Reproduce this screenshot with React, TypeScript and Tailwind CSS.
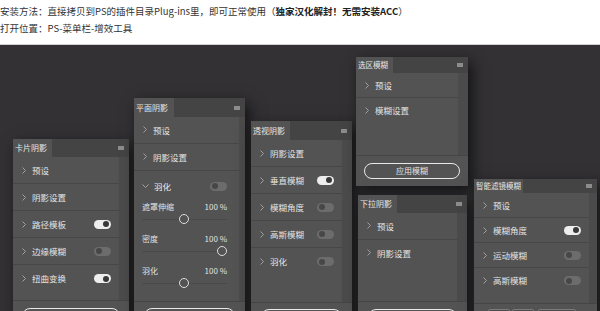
import React from "react";

type Row = { label: string; toggle?: boolean };

const panelFont = "font-['Noto_Sans_CJK_SC','Noto_Sans',sans-serif]";

function Chevron() {
  return (
    <svg width="4" height="7" viewBox="0 0 4 7" className="shrink-0">
      <polyline points="0.5,0.5 3.5,3.5 0.5,6.5" fill="none" stroke="#a9a9a9" strokeWidth="0.9" />
    </svg>
  );
}

function ChevronDown() {
  return (
    <svg width="7" height="4" viewBox="0 0 7 4" className="shrink-0">
      <polyline points="0.5,0.5 3.5,3.5 6.5,0.5" fill="none" stroke="#a9a9a9" strokeWidth="0.9" />
    </svg>
  );
}

function Toggle({ on }: { on: boolean }) {
  return on ? (
    <span className="ml-auto flex h-[9px] w-[17px] shrink-0 items-center justify-end rounded-full bg-[#ededed] pr-[2px]">
      <span className="h-[6px] w-[6px] rounded-full bg-[#383838]" />
    </span>
  ) : (
    <span className="ml-auto flex h-[9px] w-[17px] shrink-0 items-center rounded-full bg-[#6c6c6c] pl-[2px]">
      <span className="h-[6px] w-[6px] rounded-full bg-[#474747]" />
    </span>
  );
}

function Rows({ rows, h }: { rows: Row[]; h: string }) {
  return (
    <div className="flex flex-col divide-y divide-[#474747]">
      {rows.map((r) => (
        <div key={r.label} className={`flex items-center pl-[9px] pr-[8px] ${h}`}>
          <Chevron />
          <span className="ml-[6px] text-[8.5px] leading-none text-[#e4e4e4]">{r.label}</span>
          {r.toggle !== undefined && <Toggle on={r.toggle} />}
        </div>
      ))}
    </div>
  );
}

function Panel({
  title,
  className,
  headClass,
  tabClass,
  stripClass = "w-[10px]",
  children,
  footer,
}: {
  title: string;
  className: string;
  headClass: string;
  tabClass: string;
  stripClass?: string;
  children: React.ReactNode;
  footer: React.ReactNode;
}) {
  return (
    <div className={`flex shrink-0 flex-col bg-[#535353] shadow-[4px_5px_14px_rgba(0,0,0,0.65)] ${panelFont} ${className}`}>
      {/* 标题栏 */}
      <div className={`flex items-stretch bg-[#444444] ${headClass}`}>
        <div className={`flex items-center bg-[#535353] pl-[2px] leading-none text-[#e6e6e6] ${tabClass}`}>{title}</div>
        <span className="ml-auto mr-[5px] h-[4px] w-[6px] self-center bg-[#8c8c8c]" />
      </div>
      <div className="flex">
        <div className="flex flex-1 flex-col">{children}</div>
        <div className={`bg-[#4b4b4b] ${stripClass}`} />
      </div>
      <div className="border-t border-[#454545]">{footer}</div>
    </div>
  );
}

function PillButton({ text = "" }: { text?: string }) {
  return (
    <div className="flex h-[16px] items-center justify-center rounded-full border-[1.5px] border-[#e9e9e9] text-[8px] leading-none text-[#e2e2e2]">
      {text}
    </div>
  );
}

const sliders = [
  { label: "遮罩伸缩", knob: "left-[37px]" },
  { label: "密度", knob: "left-[75px]" },
  { label: "羽化", knob: "left-[37px]" },
];

export default function App() {
  return (
    <div className="h-[311px] w-[600px] overflow-hidden bg-white">
      {/* 说明文字 */}
      <div className="h-[45px] border-b border-[#d2d2d2] pt-[3px] font-['Noto_Sans_CJK_SC','Noto_Sans',sans-serif] text-[9.5px] leading-[17px] text-[#333]">
        <p className="whitespace-nowrap">
          安装方法：直接拷贝到PS的插件目录Plug-ins里，即可正常使用（
          <b className="font-bold text-[#222]">独家汉化解封！无需安装ACC</b>）
        </p>
        <p className="whitespace-nowrap">打开位置：PS-菜单栏-增效工具</p>
      </div>

      {/* 面板区域 */}
      <div className="h-[266px] overflow-hidden bg-[#333134]">
        <div className="flex items-start pl-[13px]">
          <Panel
            title="卡片阴影"
            className="mt-[94px] w-[116px]"
            headClass="h-[18px]"
            tabClass="w-[39px] text-[8px]"
            footer={
              <div className="px-[9px] pt-[7px] pb-[7px]">
                <PillButton />
              </div>
            }
          >
            <Rows
              h="h-[27px]"
              rows={[
                { label: "预设" },
                { label: "阴影设置" },
                { label: "路径模板", toggle: true },
                { label: "边缘模糊", toggle: false },
                { label: "扭曲变换", toggle: true },
              ]}
            />
            <div className="h-[8px]" />
          </Panel>

          <Panel
            title="平面阴影"
            className="ml-[5px] mt-[53px] w-[111px]"
            headClass="h-[19px]"
            tabClass="w-[40px] text-[8px]"
            stripClass="w-[6px]"
            footer={
              <div className="px-[10px] pt-[6px] pb-[7px]">
                <PillButton />
              </div>
            }
          >
            <Rows h="h-[26.5px]" rows={[{ label: "预设" }, { label: "阴影设置" }]} />
            <div className="border-t border-[#474747]">
              <div className="flex h-[30px] items-center pl-[8px] pr-[12px]">
                <ChevronDown />
                <span className="ml-[5px] text-[8.5px] leading-none text-[#e8e8e8]">羽化</span>
                <Toggle on={false} />
              </div>
              {sliders.map((s) => (
                <div key={s.label} className="h-[32px] pl-[8px] pr-[12px]">
                  <div className="flex h-[12px] items-center justify-between text-[8px] leading-none text-[#e0e0e0]">
                    <span>{s.label}</span>
                    <span>100 %</span>
                  </div>
                  <div className="relative flex h-[12px] items-center">
                    <div className="h-px w-full bg-[#4a4a4a]" />
                    <span className={`absolute top-[1px] h-[10px] w-[10px] rounded-full border-[1.3px] border-[#dcdcdc] bg-[#535353] ${s.knob}`} />
                  </div>
                </div>
              ))}
              <div className="h-[4px]" />
            </div>
          </Panel>

          <Panel
            title="透视阴影"
            className="ml-[6px] mt-[76px] w-[101px]"
            headClass="h-[19px]"
            tabClass="w-[39px] text-[8px]"
            footer={
              <div className="px-[10px] pt-[6px] pb-[7px]">
                <PillButton />
              </div>
            }
          >
            <Rows
              h="h-[27px]"
              rows={[
                { label: "阴影设置" },
                { label: "垂直模糊", toggle: true },
                { label: "模糊角度", toggle: false },
                { label: "高斯模糊", toggle: false },
                { label: "羽化", toggle: false },
              ]}
            />
            <div className="h-[27px]" />
          </Panel>

          <div className="ml-[4px] mt-[12px] flex w-[112px] shrink-0 flex-col items-start">
            <Panel
              title="选区模糊"
              className="w-[112px]"
              headClass="h-[16px]"
              tabClass="w-[37px] text-[7.5px]"
              footer={
                <div className="px-[8px] pt-[7px] pb-[7px]">
                  <PillButton text="应用模糊" />
                </div>
              }
            >
              <Rows h="h-[25px]" rows={[{ label: "预设" }, { label: "模糊设置" }]} />
              <div className="h-[32px]" />
            </Panel>

            <Panel
              title="下拉阴影"
              className="ml-[2px] mt-[9px] w-[109px]"
              headClass="h-[18px]"
              tabClass="w-[39px] text-[8px]"
              footer={
                <div className="px-[10px] pt-[7px] pb-[7px]">
                  <PillButton />
                </div>
              }
            >
              <Rows h="h-[26.5px]" rows={[{ label: "预设" }, { label: "阴影设置" }]} />
              <div className="h-[35px]" />
            </Panel>
          </div>

          <Panel
            title="智能滤镜模糊"
            className="ml-[6px] mt-[134px] w-[123px]"
            headClass="h-[14px]"
            tabClass="w-[49px] text-[7.5px]"
            stripClass="w-[8px]"
            footer={
              <div className="flex gap-[2px] pl-[14px] pt-[5px] pb-[6px]">
                <span className="h-[12px] w-[22px] rounded-[2px] border border-[#7a7a7a] bg-[#4b4b4b]" />
                <span className="h-[12px] w-[22px] rounded-[2px] border border-[#7a7a7a] bg-[#4b4b4b]" />
                <span className="ml-[2px] h-[12px] w-[38px] rounded-[2px] border border-[#7a7a7a] bg-[#4b4b4b]" />
              </div>
            }
          >
            <Rows
              h="h-[25px]"
              rows={[
                { label: "预设" },
                { label: "模糊角度", toggle: true },
                { label: "运动模糊", toggle: false },
                { label: "高斯模糊", toggle: false },
              ]}
            />
            <div className="h-[10px]" />
          </Panel>
        </div>
      </div>
    </div>
  );
}
